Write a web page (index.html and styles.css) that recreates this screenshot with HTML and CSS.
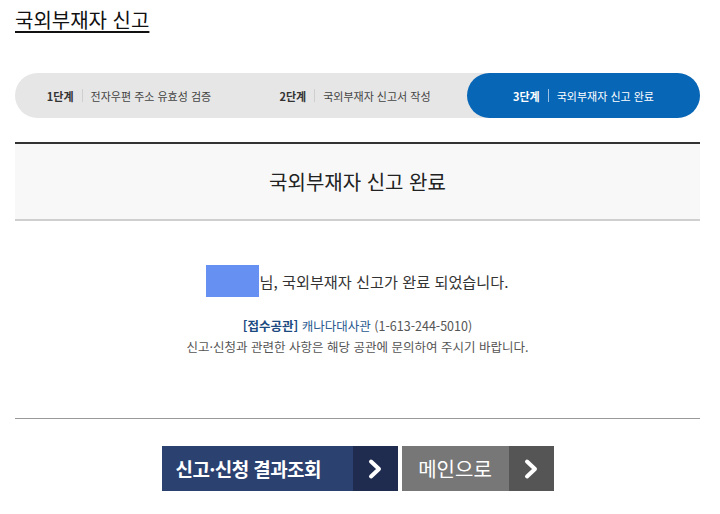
FILE: index.html
```html
<!DOCTYPE html>
<html lang="ko">
<head>
    <meta charset="UTF-8">
    <meta name="viewport" content="width=device-width, initial-scale=1.0">
    <title>국외부재자 신고</title>
    <link rel="stylesheet" href="styles.css">
</head>
<body>
    <div class="container">
        <h1 class="page-title">국외부재자 신고</h1>

        <ol class="steps">
            <li class="step"><span class="step-num">1단계</span><span class="step-bar"></span><span class="step-name">전자우편 주소 유효성 검증</span></li>
            <li class="step"><span class="step-num">2단계</span><span class="step-bar"></span><span class="step-name">국외부재자 신고서 작성</span></li>
            <li class="step active"><span class="step-num">3단계</span><span class="step-bar"></span><span class="step-name">국외부재자 신고 완료</span></li>
        </ol>

        <div class="result">
            <div class="result-head">국외부재자 신고 완료</div>
            <div class="result-body">
                <p class="msg"><span class="masked"></span>님, 국외부재자 신고가 완료 되었습니다.</p>
                <p class="office"><strong>[접수공관]</strong> <span class="office-name">캐나다대사관</span> (1-613-244-5010)</p>
                <p class="note">신고·신청과 관련한 사항은 해당 공관에 문의하여 주시기 바랍니다.</p>
            </div>
        </div>

        <div class="btn-row">
            <a href="#" class="btn btn-navy"><span class="btn-label">신고·신청 결과조회</span><span class="btn-arrow"><svg width="16" height="22" viewBox="0 0 16 22"><polyline points="4,3.5 12,11 4,18.5" fill="none" stroke="#fff" stroke-width="4" stroke-linecap="round" stroke-linejoin="round"/></svg></span></a>
            <a href="#" class="btn btn-gray"><span class="btn-label">메인으로</span><span class="btn-arrow"><svg width="16" height="22" viewBox="0 0 16 22"><polyline points="4,3.5 12,11 4,18.5" fill="none" stroke="#fff" stroke-width="4" stroke-linecap="round" stroke-linejoin="round"/></svg></span></a>
        </div>
    </div>
</body>
</html>
```

FILE: styles.css
```css
body {
    margin: 0;
    background-color: #fff;
    font-family: "Noto Sans CJK KR", "Malgun Gothic", sans-serif;
    color: #333;
}
.container {
    width: 685px;
    padding: 6px 0 0 15px;
}
.page-title {
    margin: 0;
    font-size: 20px;
    font-weight: normal;
    line-height: 28px;
    color: #111;
    text-decoration: underline;
    text-decoration-thickness: 2px;
    text-underline-offset: 3px;
}
.steps {
    list-style: none;
    margin: 39px 0 0;
    padding: 0;
    display: grid;
    grid-template-columns: 228px 224px 233px;
    height: 45px;
    background-color: #e6e6e6;
    border-radius: 23px;
}
.step {
    display: flex;
    align-items: center;
    justify-content: center;
    font-size: 11px;
    color: #444;
}
.step-num {
    font-weight: bold;
    color: #333;
}
.step-bar {
    width: 1px;
    height: 13px;
    background-color: #cfcfcf;
    margin: 0 8px;
}
.step.active {
    background-color: #0866b6;
    border-radius: 23px;
    color: #fff;
}
.step.active .step-num {
    color: #fff;
}
.step.active .step-bar {
    background-color: #9cc1e4;
}
.result {
    margin-top: 24px;
    border-top: 2px solid #333;
}
.result-head {
    height: 75px;
    display: flex;
    align-items: center;
    justify-content: center;
    background-color: #f8f8f8;
    border-bottom: 2px solid #cfcfcf;
    font-size: 20px;
    color: #222;
}
.result-body {
    padding: 44px 0 61px;
    text-align: center;
    border-bottom: 1px solid #999;
}
.result-body p {
    margin: 0;
}
.msg {
    font-size: 15.2px;
    line-height: 32px;
    color: #333;
}
.masked {
    display: inline-block;
    width: 53px;
    height: 32px;
    vertical-align: top;
    background-color: #6690f2;
}
.office {
    margin-top: 18px !important;
    font-size: 12.5px;
    line-height: 21px;
    color: #555;
}
.office strong {
    color: #1b4a80;
}
.office-name {
    color: #2a5a90;
}
.note {
    font-size: 12.5px;
    line-height: 21px;
    color: #555;
}
.btn-row {
    display: flex;
    justify-content: center;
    gap: 4px;
    margin-top: 27px;
}
.btn {
    display: flex;
    height: 45px;
    color: #fff;
    text-decoration: none;
    font-size: 20px;
    white-space: nowrap;
}
.btn-label {
    display: flex;
    align-items: center;
    padding: 0 14px;
}
.btn-arrow {
    width: 45px;
    display: flex;
    align-items: center;
    justify-content: center;
}
.btn-navy {
    background-color: #2b4170;
    font-weight: bold;
}
.btn-navy .btn-label {
    width: 191px;
    box-sizing: border-box;
    font-size: 19px;
    letter-spacing: -0.6px;
}
.btn-navy .btn-arrow {
    background-color: #1f2c4f;
}
.btn-gray {
    background-color: #777;
}
.btn-gray .btn-label {
    width: 107px;
    box-sizing: border-box;
    justify-content: center;
}
.btn-gray .btn-arrow {
    background-color: #555;
}
```
